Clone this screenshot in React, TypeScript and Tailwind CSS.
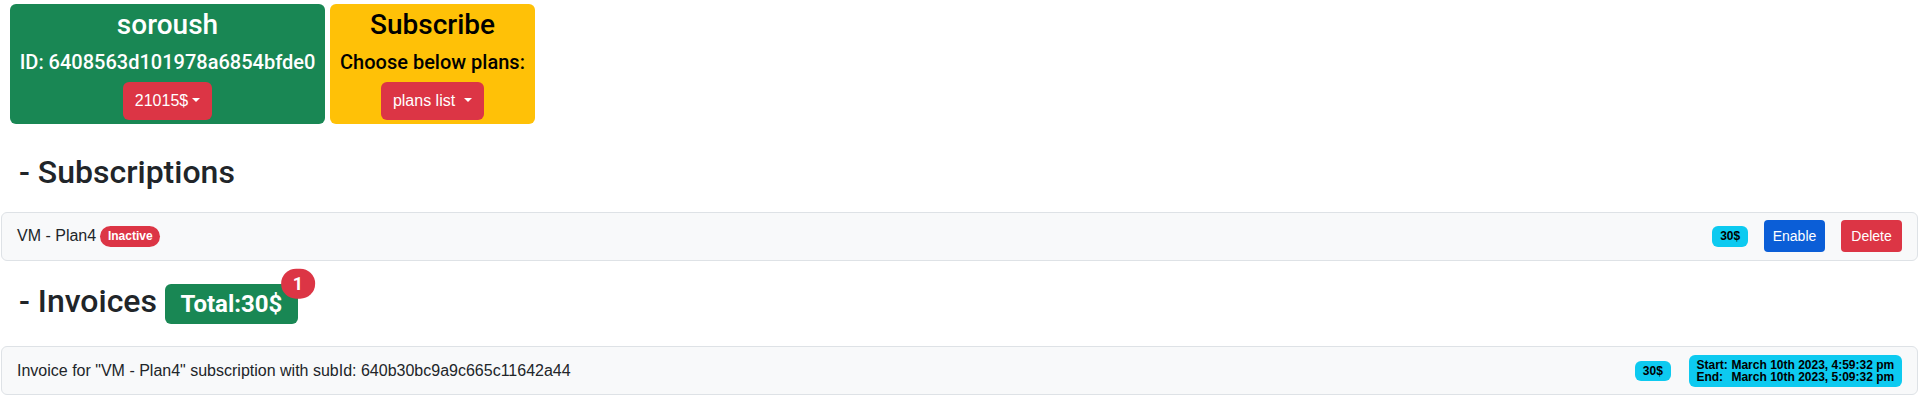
import React from "react";

function Caret({ className = "" }: { className?: string }) {
  return (
    <span
      className={
        "inline-block align-[0.255em] border-t-[4.8px] border-x-[4.8px] border-b-0 border-t-current border-x-transparent " +
        className
      }
    />
  );
}

const head = "font-['Roboto','Liberation_Sans',Arial,sans-serif] font-medium";

export default function App() {
  return (
    <div className="min-h-[412px] bg-white text-[#212529] font-['Liberation_Sans',Arial,sans-serif] text-[16px] leading-[1.5]">
      <div className="flex items-start gap-[5px] pl-[10px] pt-[4px]">
        <div className="w-[315px] rounded-[6px] bg-[#198754] px-2 py-1 text-center text-white">
          <h3 className={"mb-2 text-[28px] leading-[1.2] " + head}>soroush</h3>
          <h5 className={"mb-2 whitespace-nowrap text-[20px] leading-[1.2] " + head}>
            ID: 6408563d101978a6854bfde0
          </h5>
          <button className="h-[38px] rounded-[6px] bg-[#dc3545] px-3 text-white">
            21015$
            <Caret className="ml-[4px]" />
          </button>
        </div>
        <div className="w-[205px] rounded-[6px] bg-[#ffc107] px-2 py-1 text-center text-black">
          <h3 className={"mb-2 text-[28px] leading-[1.2] " + head}>Subscribe</h3>
          <h5 className={"mb-2 whitespace-nowrap text-[20px] leading-[1.2] " + head}>
            Choose below plans:
          </h5>
          <button className="h-[38px] rounded-[6px] bg-[#dc3545] px-3 text-white">
            plans list
            <Caret className="ml-[9px]" />
          </button>
        </div>
      </div>

      <h2 className={"mt-[29px] pl-[19px] text-[32px] leading-[1.2] " + head}>- Subscriptions</h2>

      <div className="ml-[1px] mr-[2px] mt-[21px] flex h-[49px] items-center justify-between rounded-[6px] border border-[#dee2e6] bg-[#f8f9fa] px-[15px]">
        <div className="flex items-center">
          <span>VM - Plan4</span>
          <span className="ml-[4px] rounded-full bg-[#dc3545] px-[7.8px] py-[4.2px] text-[12px] leading-none font-bold text-white">
            Inactive
          </span>
        </div>
        <div className="flex items-center">
          <span className="rounded-[6px] bg-[#0dcaf0] px-[7.8px] py-[4.2px] text-[12px] leading-none font-bold text-black">
            30$
          </span>
          <button className="ml-[16px] h-[32px] w-[61px] rounded-[4px] bg-[#0b5ed7] text-[14px] leading-[1.5] text-white">
            Enable
          </button>
          <button className="ml-[16px] h-[32px] w-[61px] rounded-[4px] bg-[#dc3545] text-[14px] leading-[1.5] text-white">
            Delete
          </button>
        </div>
      </div>

      <h2 className={"mt-[21px] flex items-baseline pl-[19px] text-[32px] leading-[1.2] " + head}>
        <span>- Invoices</span>
        <span className="relative ml-[8px] rounded-[6px] bg-[#198754] px-[15.6px] py-[8.4px] text-[24px] leading-none font-bold text-white">
          Total:30$
          <span className="absolute left-full top-0 -translate-x-1/2 -translate-y-1/2 rounded-full bg-[#dc3545] px-[11.7px] py-[6.3px] text-[18px] leading-none font-bold text-white">
            1
          </span>
        </span>
      </h2>

      <div className="ml-[1px] mr-[2px] mt-[22px] flex h-[49px] items-center justify-between rounded-[6px] border border-[#dee2e6] bg-[#f8f9fa] px-[15px]">
        <span>Invoice for "VM - Plan4" subscription with subId: 640b30bc9a9c665c11642a44</span>
        <div className="flex items-center">
          <span className="rounded-[6px] bg-[#0dcaf0] px-[7.8px] py-[4.2px] text-[12px] leading-none font-bold text-black">
            30$
          </span>
          <span className="ml-[18px] flex flex-col rounded-[6px] bg-[#0dcaf0] px-[7.8px] py-[4.2px] text-[12px] leading-none font-bold text-black">
            <span className="flex whitespace-nowrap">
              <span className="w-[35px]">Start:</span>
              <span>March 10th 2023, 4:59:32 pm</span>
            </span>
            <span className="flex whitespace-nowrap">
              <span className="w-[35px]">End:</span>
              <span>March 10th 2023, 5:09:32 pm</span>
            </span>
          </span>
        </div>
      </div>
    </div>
  );
}
